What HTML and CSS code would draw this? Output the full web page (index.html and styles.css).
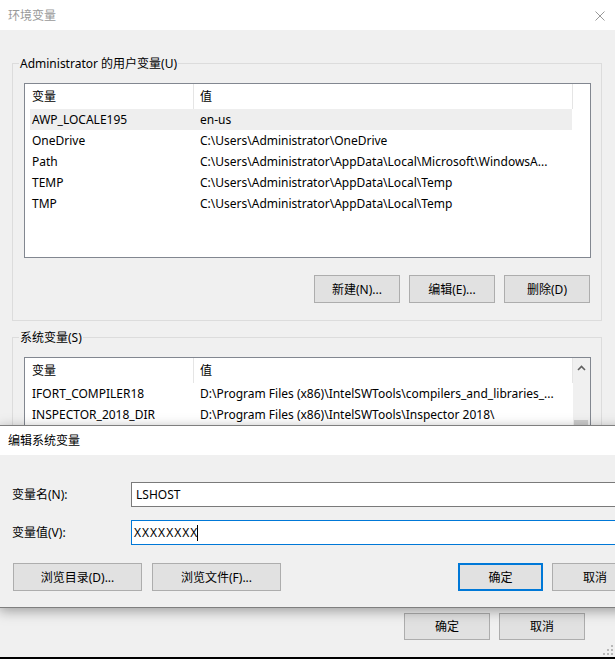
FILE: index.html
```html
<!DOCTYPE html>
<html lang="zh-CN">
<head>
<meta charset="utf-8">
<title>环境变量</title>
<link rel="stylesheet" href="styles.css">
</head>
<body>
<div class="window">
  <div class="titlebar">
    <span class="title">环境变量</span>
    <svg class="close" width="10" height="10" viewBox="0 0 10 10"><path d="M0.5 0.5 L9.5 9.5 M9.5 0.5 L0.5 9.5" stroke="#999" stroke-width="1" fill="none"/></svg>
  </div>

  <fieldset class="group group-user">
    <legend>Administrator 的用户变量(U)</legend>
    <div class="list list-user">
      <div class="list-main">
        <div class="list-head"><div class="hcell hname">变量</div><div class="hcell hval">值</div></div>
        <div class="row selected"><span class="cname">AWP_LOCALE195</span><span class="cval">en-us</span></div>
        <div class="row"><span class="cname">OneDrive</span><span class="cval">C:\Users\Administrator\OneDrive</span></div>
        <div class="row"><span class="cname">Path</span><span class="cval">C:\Users\Administrator\AppData\Local\Microsoft\WindowsA...</span></div>
        <div class="row"><span class="cname">TEMP</span><span class="cval">C:\Users\Administrator\AppData\Local\Temp</span></div>
        <div class="row"><span class="cname">TMP</span><span class="cval">C:\Users\Administrator\AppData\Local\Temp</span></div>
      </div>
    </div>
    <div class="btn-row">
      <button class="btn">新建(N)...</button>
      <button class="btn">编辑(E)...</button>
      <button class="btn">删除(D)</button>
    </div>
  </fieldset>

  <fieldset class="group group-sys">
    <legend>系统变量(S)</legend>
    <div class="list list-sys">
      <div class="list-main">
        <div class="list-head"><div class="hcell hname">变量</div><div class="hcell hval">值</div></div>
        <div class="row"><span class="cname">IFORT_COMPILER18</span><span class="cval">D:\Program Files (x86)\IntelSWTools\compilers_and_libraries_...</span></div>
        <div class="row"><span class="cname">INSPECTOR_2018_DIR</span><span class="cval">D:\Program Files (x86)\IntelSWTools\Inspector 2018\</span></div>
      </div>
      <div class="scrollbar">
        <div class="sb-arrow"><svg width="9" height="6" viewBox="0 0 9 6"><path d="M1 5 L4.5 1.5 L8 5" stroke="#606060" stroke-width="1.6" fill="none"/></svg></div>
        <div class="sb-thumb"></div>
      </div>
    </div>
  </fieldset>

  <div class="footer">
    <button class="btn btn-foot">确定</button>
    <button class="btn btn-foot">取消</button>
  </div>

  <svg class="grip" width="10" height="10" viewBox="0 0 10 10">
    <rect x="8" y="0" width="2" height="2" fill="#b8b8b8"/>
    <rect x="4" y="4" width="2" height="2" fill="#b8b8b8"/>
    <rect x="8" y="4" width="2" height="2" fill="#b8b8b8"/>
    <rect x="0" y="8" width="2" height="2" fill="#b8b8b8"/>
    <rect x="4" y="8" width="2" height="2" fill="#b8b8b8"/>
    <rect x="8" y="8" width="2" height="2" fill="#b8b8b8"/>
  </svg>

  <div class="dialog">
    <div class="dlg-title">编辑系统变量</div>
    <div class="dlg-body">
      <div class="field">
        <span class="flabel">变量名(N):</span>
        <div class="finput">LSHOST</div>
      </div>
      <div class="field field-val">
        <span class="flabel">变量值(V):</span>
        <div class="finput focused"><span class="xval">XXXXXXXX</span><span class="caret"></span></div>
      </div>
      <div class="dlg-buttons">
        <button class="btn btn-wide">浏览目录(D)...</button>
        <button class="btn btn-wide btn-wide2">浏览文件(F)...</button>
        <button class="btn btn-ok">确定</button>
        <button class="btn btn-cancel">取消</button>
      </div>
    </div>
  </div>
</div>
</body>
</html>
```
FILE: styles.css
```css
* { box-sizing: border-box; }
html, body { margin: 0; padding: 0; background: #000; }
body {
  font-family: "Noto Sans", "Noto Sans CJK SC", sans-serif;
  font-size: 12px;
  line-height: 16px;
  color: #000;
}
.window {
  position: relative;
  width: 615px;
  height: 657px;
  background: #f0f0f0;
  overflow: hidden;
  display: flex;
  flex-direction: column;
}
.titlebar {
  height: 30px;
  flex: none;
  background: #fff;
  display: flex;
  align-items: center;
  justify-content: space-between;
  padding: 1px 10px 0 8px;
  color: #999;
}
.close { display: block; }

.group {
  margin: 0 0 0 12px;
  width: 590px;
  border: 1px solid #dcdcdc;
  padding: 11px 10px 17px 6px;
  min-width: 0;
  flex: none;
}
.group legend {
  padding: 1px 1px 0;
  line-height: 16px;
  height: 17px;
}
.group-user { margin-top: 25px; }
.group-sys { margin-top: 8px; }

.list {
  margin-left: 5px;
  width: 567px;
  border: 1px solid #828790;
  background: #fff;
  display: flex;
  overflow: hidden;
}
.list-user { height: 175px; }
.list-sys { height: 225px; }
.list-main { width: 548px; flex: none; overflow: hidden; }
.list-head { display: flex; height: 25px; }
.hcell {
  line-height: 25px;
  border-right: 1px solid #e5e5e5;
  white-space: nowrap;
}
.hname { width: 169px; padding-left: 7px; }
.hval { width: 379px; padding-left: 6px; }

.row {
  display: flex;
  margin-left: 5px;
  width: 542px;
  height: 21px;
  line-height: 22px;
  white-space: nowrap;
  overflow: hidden;
}
.row.selected { background: #eeeeee; }
.cname { width: 170px; flex: none; padding-left: 2px; }
.cval { flex: 1; overflow: hidden; }

.scrollbar {
  width: 17px;
  flex: none;
  background: #f0f0f0;
  display: flex;
  flex-direction: column;
}
.sb-arrow {
  height: 20px;
  display: flex;
  align-items: center;
  justify-content: center;
}
.sb-arrow svg { display: block; }
.sb-thumb {
  margin: 42px 2px 0 1px;
  height: 110px;
  background: #cdcdcd;
}

.btn-row {
  display: flex;
  justify-content: flex-end;
  gap: 9px;
  margin-top: 17px;
  margin-right: 1px;
}
.btn {
  font: inherit;
  color: #000;
  background: #e1e1e1;
  border: 1px solid #adadad;
  width: 86px;
  height: 28px;
  padding: 1px 0 0;
  margin: 0;
  line-height: 16px;
}

.footer {
  margin-top: auto;
  display: flex;
  justify-content: flex-end;
  gap: 9px;
  padding: 0 30px 17px 0;
}
.btn-foot { height: 27px; }

.grip {
  position: absolute;
  right: 2px;
  bottom: 2px;
}

.dialog {
  position: absolute;
  left: -1px;
  top: 425px;
  width: 670px;
  border: 1px solid #7f7f7f;
  box-shadow: 0 3px 12px rgba(0, 0, 0, 0.35);
  background: #f0f0f0;
}
.dlg-title {
  height: 29px;
  line-height: 30px;
  background: #fff;
  padding-left: 8px;
}
.dlg-body {
  padding: 27px 0 16px 12px;
}
.field {
  display: flex;
  align-items: center;
  height: 25px;
}
.field-val { margin-top: 13px; }
.flabel { width: 119px; flex: none; padding-top: 1px; }
.finput {
  width: 520px;
  height: 25px;
  border: 1px solid #7a7a7a;
  background: #fff;
  padding: 1px 0 0 4px;
  display: flex;
  align-items: center;
}
.finput.focused { border-color: #0078d7; padding-left: 2px; }
.xval { letter-spacing: 1px; margin-right: -1px; }
.caret {
  display: inline-block;
  width: 1px;
  height: 16px;
  background: #000;
}
.dlg-buttons {
  display: flex;
  margin-top: 18px;
}
.btn-wide { width: 129px; margin-left: 1px; }
.btn-wide2 { margin-left: 10px; }
.btn-ok {
  margin-left: 177px;
  width: 85px;
  border: 2px solid #0078d7;
}
.btn-cancel { margin-left: 9px; }
```
